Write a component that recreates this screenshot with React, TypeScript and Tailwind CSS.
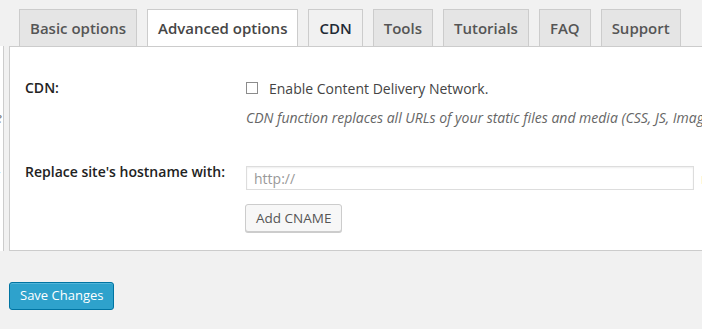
import React from 'react'

const tabs = [
  { label: 'Basic options', state: 'idle' },
  { label: 'Advanced options', state: 'hover' },
  { label: 'CDN', state: 'active' },
  { label: 'Tools', state: 'idle' },
  { label: 'Tutorials', state: 'idle' },
  { label: 'FAQ', state: 'idle' },
  { label: 'Support', state: 'idle' },
]

function Tab({ label, state }: { label: string; state: string }) {
  const base =
    'h-[37px] px-[10px] flex items-center border border-b-0 border-[#ccc] text-[15px] font-semibold leading-none whitespace-nowrap'
  if (state === 'hover') return <div className={`${base} bg-white text-[#464646]`}>{label}</div>
  if (state === 'active') return <div className={`${base} bg-[#f1f1f1] text-[#1f2a36]`}>{label}</div>
  return <div className={`${base} bg-[#e5e5e5] text-[#555]`}>{label}</div>
}

export default function App() {
  return (
    <div
      className="w-[702px] h-[329px] overflow-hidden bg-[#f1f1f1] flex text-[#444]"
      style={{ fontFamily: '"Open Sans", "Noto Sans", sans-serif' }}
    >
      {/* cut-off sidebar panel on the left */}
      <div className="shrink-0 w-[4px] mt-[46px] h-[205px] bg-white border-r border-[#ccc] overflow-hidden relative">
        <span className="absolute left-[-5px] top-[62px] text-[14px] italic text-[#777] leading-5">e</span>
        <span className="absolute left-[-4px] top-[116px] text-[14px] text-[#555] leading-5">-</span>
      </div>

      <div className="shrink-0 ml-[5px] w-[720px] flex flex-col">
        <div className="pt-[9px] pl-[10px] flex gap-[10px]">
          {tabs.map((t) => (
            <Tab key={t.label} label={t.label} state={t.state} />
          ))}
        </div>

        <div className="h-[205px] bg-white border border-[#ccc] pl-[15px] pt-[31px] flex flex-col">
          <div className="flex">
            <div className="w-[221px] shrink-0 text-[14px] font-semibold text-[#222] leading-5">CDN:</div>
            <div className="flex flex-col">
              <label className="flex items-center h-5 text-[14px] text-[#444]">
                <span className="w-[12px] h-[12px] border border-[#8c8c8c] bg-white shrink-0" />
                <span className="ml-[11px]">Enable Content Delivery Network.</span>
              </label>
              <p className="mt-[10px] text-[14px] italic text-[#666] leading-5 whitespace-nowrap">
                CDN function replaces all URLs of your static files and media (CSS, JS, Images) with the CDN hostname.
              </p>
            </div>
          </div>

          <div className="flex mt-[34px]">
            <div className="w-[221px] shrink-0 text-[14px] font-semibold text-[#222] leading-5">
              Replace site's hostname with:
            </div>
            <div className="flex flex-col items-start">
              <div className="flex items-center mt-[4px]">
                <input
                  type="text"
                  placeholder="http://"
                  className="w-[448px] h-[24px] border border-[#ddd] bg-white px-[7px] text-[14px] text-[#333] placeholder:text-[#999] shadow-[inset_0_1px_2px_rgba(0,0,0,0.07)] outline-none"
                />
                <span className="ml-[7px] text-[14px] text-[#333]">n</span>
              </div>
              <button className="mt-[14px] h-[28px] px-[10px] border border-[#ccc] rounded-[3px] bg-[#f7f7f7] text-[13.5px] text-[#555] shadow-[0_1px_0_#ccc] -ml-px">
                Add CNAME
              </button>
            </div>
          </div>
        </div>

        <div className="mt-[31px]">
          <button className="h-[28px] px-[10px] rounded-[3px] border border-[#0074a2] bg-[#2ea2cc] text-[13px] text-white shadow-[inset_0_1px_0_rgba(120,200,230,0.5)]">
            Save Changes
          </button>
        </div>
      </div>
    </div>
  )
}
